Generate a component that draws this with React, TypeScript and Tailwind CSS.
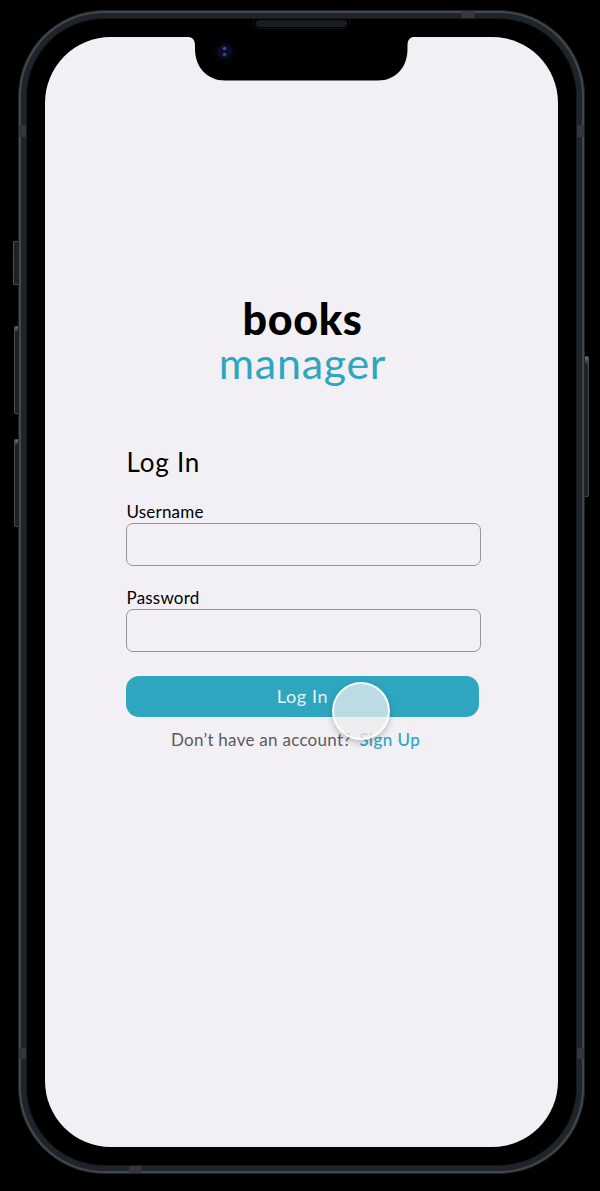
function LeftRail() {
  return (
    <div className="flex w-[18px] flex-col items-end pt-[241px]">
      <div className="h-[44px] w-[5px] rounded-l-[2px] border border-r-0 border-[#4d5156] bg-[#1c2226]" />
      <div className="mt-[41px] h-[88px] w-[4px] rounded-l-[2px] border border-r-0 border-[#4b4e52] bg-linear-to-b from-[#77797b] via-[#1b2125] via-6% to-[#1b2125]" />
      <div className="mt-[25px] h-[88px] w-[4px] rounded-l-[2px] border border-r-0 border-[#4b4e52] bg-linear-to-b from-[#77797b] via-[#1b2125] via-6% to-[#1b2125]" />
    </div>
  );
}

function RightRail() {
  return (
    <div className="flex w-[15px] flex-col items-start pt-[356px]">
      <div className="h-[141px] w-[4px] rounded-r-[2px] border border-l-0 border-[#454a4e] bg-linear-to-b from-[#77797b] via-[#1b2125] via-6% to-[#1b2125]" />
    </div>
  );
}

function AntennaBands() {
  return (
    <div className="pointer-events-none absolute inset-0 flex flex-col justify-between">
      <div className="flex h-[7px] justify-end pr-[110px]">
        <div className="w-[12px] bg-[#36393d]" />
      </div>
      <div className="flex h-[934px] justify-between">
        <div className="flex flex-col justify-between">
          <div className="h-[12px] w-[7px] bg-[#33363d]" />
          <div className="h-[11px] w-[7px] bg-[#33363a]" />
        </div>
        <div className="flex flex-col justify-between">
          <div className="h-[12px] w-[7px] bg-[#33363a]" />
          <div className="h-[11px] w-[7px] bg-[#33363a]" />
        </div>
      </div>
      <div className="flex h-[7px] pl-[110px]">
        <div className="w-[12px] bg-[#33363a]" />
      </div>
    </div>
  );
}

function Notch() {
  return (
    <svg className="absolute left-[142px] top-[-21px]" width="230" height="68" viewBox="187 16 230 68">
      <path
        d="M187 36.800C193 37 195 40 195 46V49C195 67 207 80.500 225 80.500H378C396 80.500 407.500 67 407.500 49V46C407.500 40 409.500 37 415 36.800V30H187Z"
        fill="#000"
      />
      <path d="M253.500 18V24Q253.500 28.500 258 28.500H345Q349.500 28.500 349.500 24V18" fill="none" stroke="#0e0f11" />
      <rect x="256" y="20" width="91" height="7" rx="3.500" fill="#1b1c1e" />
      <circle cx="224.500" cy="51.500" r="12" fill="#030305" />
      <circle cx="224.500" cy="51.500" r="7.500" fill="#0c0c28" />
      <ellipse cx="224.500" cy="48.500" rx="2" ry="1.700" fill="#3b4a8a" />
      <ellipse cx="224.500" cy="54.500" rx="2" ry="1.800" fill="#17517d" />
    </svg>
  );
}

function Field({ label, type }: { label: string; type: string }) {
  return (
    <label className="flex flex-col">
      <span className="h-[22px] whitespace-nowrap pl-[0.500px] text-[17px] leading-[21px] tracking-[0.200px] text-black">
        {label}
      </span>
      <input
        type={type}
        className="h-[43px] w-[355px] rounded-[7px] border border-[#98969b] bg-transparent px-3 text-[17px] outline-none"
      />
    </label>
  );
}

export default function App() {
  return (
    <div className="flex h-[1191px] w-[600px] overflow-hidden bg-black font-['Lato',sans-serif]">
      <LeftRail />
      <div className="relative mt-[10px] h-[1164px] w-[567px] rounded-[86px] border border-[#202427] bg-[#42474b] p-[2px]">
        <div className="h-full w-full rounded-[83px] bg-[#1e2429] p-[5px]">
          <div className="h-full w-full rounded-[78px] border border-[#181b1e] bg-black px-[18px] pt-[18px]">
            <main className="relative flex h-[1110px] w-[513px] flex-col rounded-[66px] bg-[#f2f0f4] pl-[81px] pt-[260px]">
              <Notch />
              <h1 className="flex w-[353px] flex-col items-center text-[43px] leading-[44px]">
                <span className="font-black tracking-[0.700px] text-black">books</span>
                <span className="tracking-[0.700px] text-[#2ea6bf]">manager</span>
              </h1>
              <form className="mt-[61px] flex flex-col" onSubmit={(e) => e.preventDefault()}>
                <h2 className="h-[32px] pl-[0.500px] text-[26px] leading-[32px] tracking-[0.800px] text-black">Log In</h2>
                <div className="mt-[23px] flex flex-col gap-[21px]">
                  <Field label="Username" type="text" />
                  <Field label="Password" type="password" />
                </div>
                <button
                  type="submit"
                  className="mt-[24px] flex h-[41px] w-[353px] items-center justify-center rounded-[13px] bg-[#2ea6bf] pb-px text-[18px] tracking-[0.600px] text-[#e8f3f7]"
                >
                  Log In
                </button>
                <p className="mt-[12px] flex gap-[8px] whitespace-nowrap pl-[45px] text-[17px] leading-[22px] text-[#5b5a5e]">
                  <span className="tracking-[0.270px]">Don’t have an account?</span>
                  <a href="#signup" className="font-medium tracking-[0.450px] text-[#2ea6bf]">Sign Up</a>
                </p>
              </form>
              <div className="absolute left-[287px] top-[645px] h-[58px] w-[58px] rounded-full border-2 border-white/90 bg-[#ececee]/75 shadow-[0_3px_6px_rgba(0,0,0,0.22)]" />
            </main>
          </div>
        </div>
        <AntennaBands />
      </div>
      <RightRail />
    </div>
  );
}
